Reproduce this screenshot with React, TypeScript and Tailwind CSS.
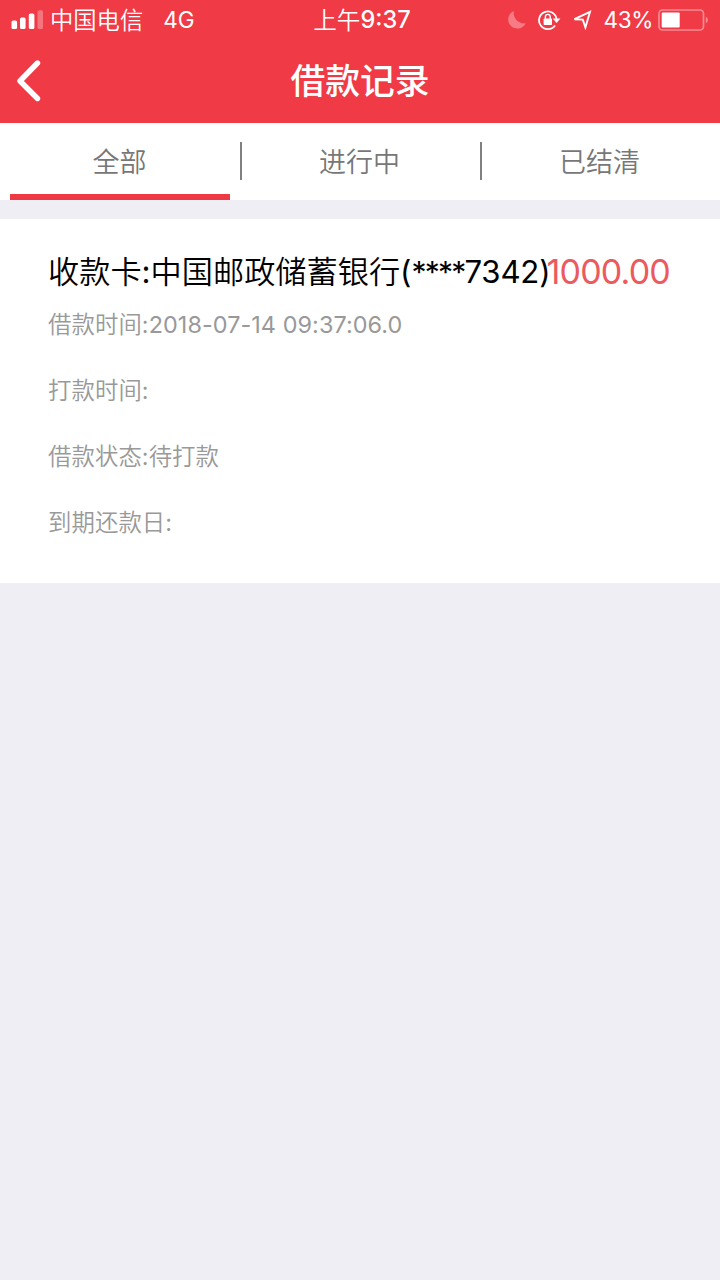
const tabs = ["全部", "进行中", "已结清"];

const details = [
  { label: "借款时间", value: "2018-07-14 09:37:06.0" },
  { label: "打款时间", value: "" },
  { label: "借款状态", status: "待打款" },
  { label: "到期还款日", value: "" },
];

function SignalIcon() {
  return (
    <svg width="32" height="20" viewBox="0 0 32 20" fill="white" className="mr-[7px] shrink-0">
      <rect x="0.5" y="10.5" width="5.6" height="8.5" rx="1.6" />
      <rect x="9" y="7.5" width="5.6" height="11.5" rx="1.6" />
      <rect x="17.8" y="3.5" width="5.6" height="15.5" rx="1.6" />
      <rect x="26.5" y="0.3" width="5.5" height="18.7" rx="1.6" opacity=".3" />
    </svg>
  );
}

function MoonIcon() {
  return (
    <svg width="18" height="20" viewBox="0 0 18 20" className="mr-3 shrink-0">
      <path d="M6 1A9.1 9.1 0 1 0 17.6 13.2A10.2 10.2 0 0 1 6 1Z" fill="#f77b84" />
    </svg>
  );
}

function RotationLockIcon() {
  return (
    <svg width="23" height="20" viewBox="0 0 23 20" fill="none" stroke="white" className="mr-[11px] shrink-0">
      <path d="M17 15.4A8.8 8.8 0 1 1 18.6 9.6" strokeWidth="1.8" />
      <path d="M14.8 8.6H22.4L18.6 13Z" fill="white" stroke="none" />
      <rect x="5.6" y="8.4" width="8.4" height="6.6" rx="0.8" fill="white" stroke="none" />
      <path d="M7.4 9V6.8a2.4 2.4 0 0 1 4.8 0V9" strokeWidth="1.4" />
    </svg>
  );
}

function LocationIcon() {
  return (
    <svg width="20" height="20" viewBox="0 0 20 20" fill="none" stroke="white" className="mr-[11px] shrink-0">
      <path d="M18 1.8L2.4 9.2L10.8 9.6L13.4 17.4Z" strokeWidth="1.9" />
    </svg>
  );
}

function BatteryIcon() {
  return (
    <svg width="52" height="22" viewBox="0 0 52 22" className="ml-[5px] shrink-0">
      <rect x="1" y="1" width="44.5" height="20" rx="3.5" fill="none" stroke="#f78b92" strokeWidth="1.7" />
      <rect x="3.7" y="3.6" width="18" height="15" rx="1" fill="white" />
      <path d="M47.8 7.5a4 4 0 0 1 0 7Z" fill="#f78b92" />
    </svg>
  );
}

function StatusBar() {
  return (
    <div className="flex h-10 items-center text-[23px] leading-10 whitespace-nowrap">
      <div className="flex w-[280px] items-center pl-[11px]">
        <SignalIcon />
        <span className="pt-0.5 text-[23.3px] font-[350]">中国电信</span>
        <span className="ml-5 text-[22.6px]">4G</span>
      </div>
      <div className="flex w-[164px] items-center justify-center text-[23.6px]">
        <span className="pt-0.5 font-[350]">上午</span>
        <span className="font-medium">9:37</span>
      </div>
      <div className="flex flex-1 items-center justify-end pr-2.5">
        <MoonIcon />
        <RotationLockIcon />
        <LocationIcon />
        <span className="text-[22.6px] tracking-[-0.4px]">43%</span>
        <BatteryIcon />
      </div>
    </div>
  );
}

export default function App() {
  return (
    <div className="min-h-screen bg-[#efeef5] font-[Inter,'Noto_Sans_CJK_SC',sans-serif]">
      <header className="h-[123px] bg-[#f03a46] text-white">
        <StatusBar />
        <div className="flex h-[81px] items-center">
          <button type="button" className="w-[60px] pl-[15px]">
            <svg width="28" height="42" viewBox="0 0 28 42" fill="none" stroke="white" strokeWidth="5.4" strokeLinecap="round" strokeLinejoin="round">
              <path d="M22.5 3L5 21L22.5 38.5" />
            </svg>
          </button>
          <h1 className="flex-1 pr-[60px] text-center text-[34.8px] leading-[50px] font-medium">借款记录</h1>
        </div>
      </header>
      <nav className="flex h-[77px] bg-white text-[27px] font-[350] text-[#777]">
        {tabs.map((tab, i) => (
          <div key={tab} className="flex w-60 flex-col">
            <div className="flex h-[71px] items-center">
              {i > 0 && <span className="mt-[5px] -mr-0.5 h-[38px] w-0.5 shrink-0 bg-[#808080]" />}
              <span className="flex-1 pt-[9px] pr-px text-center">{tab}</span>
            </div>
            {i === 0 && <div className="mx-2.5 h-1.5 bg-[#ee3843]" />}
          </div>
        ))}
      </nav>
      <section className="mt-[19px] h-[364px] bg-white pt-[31px] pr-[50px] pl-12">
        <div className="flex h-11 justify-between whitespace-nowrap">
          <h2 className="w-[495px] text-[31.2px] leading-[44px]">
            <span className="font-[350]">收款卡</span>:<span className="font-[350]">中国邮政储蓄银行</span>(
            <span className="text-[30px] tracking-[-1.8px]">****</span>
            <span className="tracking-[-0.2px]">7342)</span>
          </h2>
          <span className="text-[34px] leading-[44px] tracking-[-0.8px] text-[#eb5a5e]">1000.00</span>
        </div>
        {details.map(({ label, value, status }) => (
          <p key={label} className="h-[66px] text-[23.4px] leading-[62px] tracking-[0.07px] text-[#999]">
            <span className="font-[350]">{label}</span>:{value}
            {status && <span className="font-[350]">{status}</span>}
          </p>
        ))}
      </section>
    </div>
  );
}
